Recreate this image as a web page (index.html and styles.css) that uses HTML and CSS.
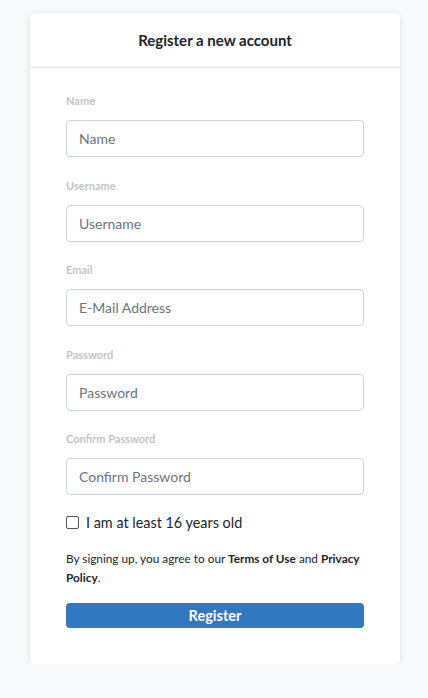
FILE: index.html
```html
<!DOCTYPE html>
<html lang="en">
<head>
<meta charset="utf-8">
<title>Register</title>
<link rel="stylesheet" href="styles.css">
</head>
<body>
<div class="page">
  <div class="card">
    <div class="card-header">Register a new account</div>
    <form class="card-body">
      <div class="group">
        <label class="label">Name</label>
        <input class="input" type="text" placeholder="Name">
      </div>
      <div class="group">
        <label class="label">Username</label>
        <input class="input" type="text" placeholder="Username">
      </div>
      <div class="group">
        <label class="label">Email</label>
        <input class="input" type="email" placeholder="E-Mail Address">
      </div>
      <div class="group">
        <label class="label">Password</label>
        <input class="input" type="password" placeholder="Password">
      </div>
      <div class="group">
        <label class="label">Confirm Password</label>
        <input class="input" type="password" placeholder="Confirm Password">
      </div>
      <label class="check-row">
        <span class="checkbox"></span>
        <span>I am at least 16 years old</span>
      </label>
      <p class="terms">By signing up, you agree to our <b>Terms of Use</b> and <b>Privacy Policy</b>.</p>
      <button class="btn" type="button">Register</button>
    </form>
  </div>
</div>
</body>
</html>
```
FILE: styles.css
```css
* { box-sizing: border-box; }
html, body { margin: 0; padding: 0; }
body {
  background: #f8fafc;
  font-family: "Lato", "Noto Sans", sans-serif;
  color: #212529;
}
.page {
  padding: 13px 28px 0 30px;
}
.card {
  width: 370px;
  background: #fff;
  border-radius: 4px;
  box-shadow: 0 1px 6px rgba(0, 0, 0, 0.12);
}
.card-header {
  height: 55px;
  border-bottom: 1px solid #e2e5e8;
  display: flex;
  align-items: center;
  justify-content: center;
  font-size: 15px;
  font-weight: 700;
  color: #212529;
}
.card-body {
  padding: 25px 36px 36px 36px;
  display: flex;
  flex-direction: column;
  margin: 0;
}
.group {
  display: flex;
  flex-direction: column;
  margin-bottom: 20.5px;
}
.label {
  font-size: 11px;
  line-height: 16px;
  font-weight: 700;
  color: #bfc4cc;
  margin-bottom: 11px;
}
.input {
  height: 37px;
  border: 1px solid #ced4da;
  border-radius: 4px;
  padding: 0 12px;
  font-family: inherit;
  font-size: 14px;
  color: #495057;
  background: #fff;
}
.input::placeholder { color: #6c757d; }
.check-row {
  display: flex;
  align-items: center;
  gap: 7px;
  height: 20px;
  margin-top: -3.5px;
  font-size: 14.4px;
  color: #212529;
}
.checkbox {
  width: 13px;
  height: 13px;
  border: 1px solid #555;
  border-radius: 2px;
  background: #fff;
}
.terms {
  margin: 16.5px 0 0 0;
  font-size: 11.8px;
  line-height: 19px;
  color: #212529;
}
.terms b { font-weight: 700; }
.btn {
  margin-top: 16.5px;
  height: 25px;
  border: none;
  border-radius: 4px;
  background: #3079c0;
  color: #fff;
  font-family: inherit;
  font-size: 14.5px;
  font-weight: 700;
  padding: 0;
}
```
